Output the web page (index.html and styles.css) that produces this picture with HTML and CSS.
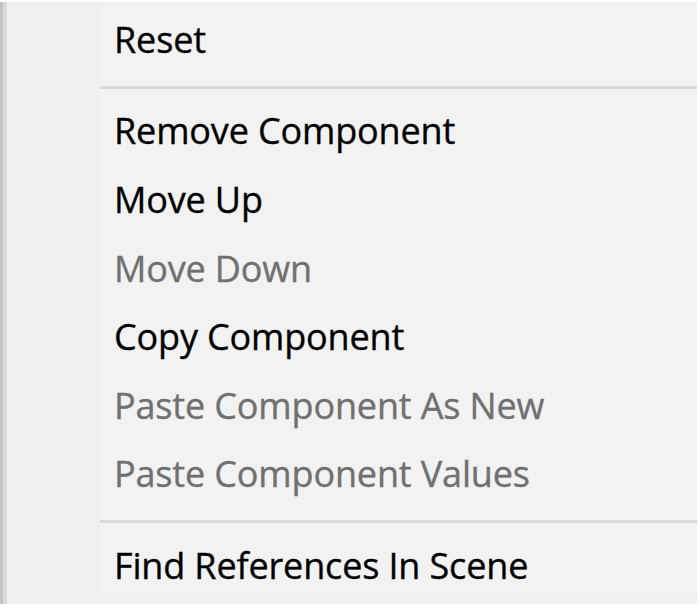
FILE: index.html
```html
<!DOCTYPE html>
<html>
<head>
<meta charset="utf-8">
<link rel="stylesheet" href="styles.css">
</head>
<body>
<div class="menu">
  <div class="edge"></div>
  <div class="gutter"></div>
  <div class="list">
    <div class="item">Reset</div>
    <div class="sep"><div class="line"></div></div>
    <div class="item">Remove Component</div>
    <div class="item">Move Up</div>
    <div class="item disabled">Move Down</div>
    <div class="item">Copy Component</div>
    <div class="item disabled">Paste Component As New</div>
    <div class="item disabled">Paste Component Values</div>
    <div class="sep"><div class="line"></div></div>
    <div class="item">Find References In Scene</div>
  </div>
</div>
</body>
</html>
```
FILE: styles.css
```css
body {
  margin: 0;
  background: #ffffff;
  font-family: "Open Sans", "Noto Sans", sans-serif;
}
.menu {
  margin-top: 2px;
  width: 697px;
  height: 602px;
  display: flex;
  align-items: flex-start;
  background: #f0f0f0;
}
.edge {
  width: 7px;
  align-self: stretch;
  background: linear-gradient(to right, #c4c4c4 0 3px, #dadada 3px 7px);
}
.gutter {
  width: 93px;
}
.list {
  flex: 1;
  margin-top: 5px;
  height: 585px;
  background: #f2f2f2;
}
.item {
  height: 68.6px;
  padding-left: 14px;
  font-size: 36px;
  line-height: 66px;
  color: #000000;
  white-space: nowrap;
  letter-spacing: -0.15px;
  -webkit-text-stroke: 0.35px currentColor;
}
.item.disabled {
  color: #707070;
}
.sep {
  height: 22.87px;
  overflow: hidden;
}
.line {
  margin-top: 10.4px;
  height: 3px;
  background: #d7dad9;
}
```
